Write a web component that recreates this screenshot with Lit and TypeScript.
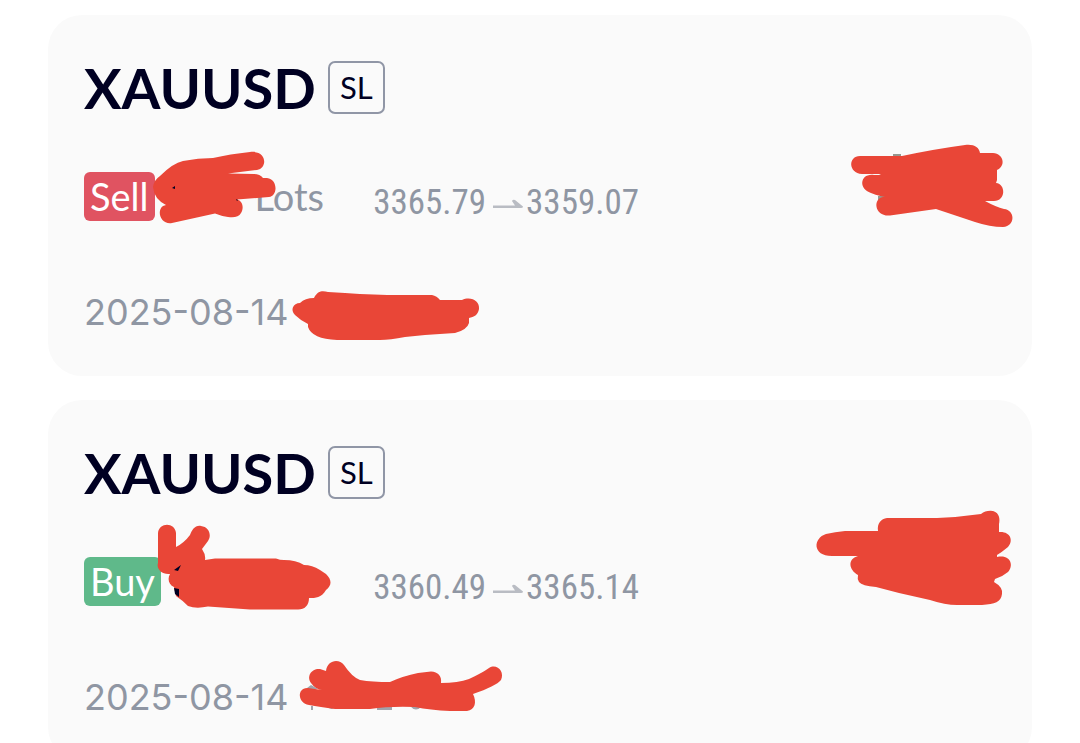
import { LitElement, html, css, svg } from "lit";
import { customElement, property } from "lit/decorators.js";

interface Trade {
  symbol: string;
  side: "Sell" | "Buy";
  open: string;
  close: string;
  date: string;
  top: number;
  left: unknown;
  right: unknown;
}

const trades: Trade[] = [
  {
    symbol: "XAUUSD",
    side: "Sell",
    open: "3365.79",
    close: "3359.07",
    date: "2025-08-14",
    top: 15,
    left: svg`
      <path d="M153 187Q154 180 160 176Q173 163 183 161Q198 158 213 158Q230 154 250 152C267 150 268 168 257 170L228 173.500L254 174Q260 174 263 178H267C278 179 278 196 269 197L237 199.500C243 201 244 208 241 213C239 217 234 218 228 217Q221 216 215 213.500L172 223C161 225 156 211 163 206L166 205Q154 199 153 187Z"/>
      <path class="ink" d="M172 188L175 186V189ZM236 199L238 200L237 201Z"/>
      <path d="M300 303Q305 298 314 298C318 290 323 291 328 292L345 293Q375 295 400 295H432Q437 296 440 300H462C471 296 480 301 479 309C478 315 474 317 469 318V323Q467 330 455 333Q440 334 425 335L405 337Q390 340 380 340H337Q312 339 308 327V324Q300 320 295 315C290 310 293 303 300 303Z"/>`,
    right: svg`
      <path class="trace" d="M893 154H901V159H893ZM878 196H888V200H878Z"/>
      <path d="M860 156H902Q935 149 965 145C974 144 979 147 980 153H993C1004 154 1006 166 997 170V180L996 183C1006 184 1006 201 994 201L985 201Q996 207 1004 209C1015 210 1016 226 1003 227Q990 227 975 222L936 209L890 215.500C875 217 872 199 883 197L894 197Q882 198 871 193C858 189 860 173 874 175H881L879 174H862C848 173 848 156 860 156Z"/>`,
  },
  {
    symbol: "XAUUSD",
    side: "Buy",
    open: "3360.49",
    close: "3365.14",
    date: "2025-08-14",
    top: 400,
    left: svg`
      <path d="M158 533C159 522 175 522 176 533V547Q184 543 190 535C192 530 195 525 201 526C209 527 212 535 208 541L202 549Q206 555 205 560L215 558.500H276Q280 560 284 560Q296 560 304 565Q312 565 320 570L326 574C332 580 332 585 326 590C321 598 316 598 309 598C309 606 304 610 297 609.500H250L208 606.500Q196 609 188 606Q182 600 176 596L174 587C169 585 167 579 170 574C162 575 156 569 158 563Z"/>
      <path class="ink" d="M174 570L181 565L178 571ZM174 588L179 589V597L175 594Z"/>
      <path class="time-trace" d="M307 688L311 685L318 689H307ZM311 706H313V710H311ZM326 706H337Q332 712 326 706ZM358 706H370Q364 712 358 706ZM377 706H392V710H377ZM410 706H422Q416 713 410 706Z"/>
      <path d="M311 683C306 676 312 668 320 669L326 671C327 660 339 658 344 665Q352 677 360 680Q372 682 390 682Q403 676 418 673L431 671.500C438 672 442 676 441 683Q458 683 469 679Q482 673 489 668C497 663 505 672 501 680Q496 686 473 694C477 702 475 710 467 711H450Q430 710 415 707Q390 706 370 709L335 709Q320 707 309 705C297 703 297 687 308 688L322 690Q315 689 311 683Z"/>`,
    right: svg`
      <path d="M826 534Q835 532 845 531H878C877 523 881 519 887 518H937Q960 517 981 514Q986 510 993 511C1000 513 1000 520 999 524V532C1010 531 1014 540 1008 547Q1002 552 997 555V557C1011 554 1014 566 1008 572Q1002 577 995 579L994 582Q1003 587 1002 594C1001 602 995 604 982 605H957Q945 605 930 600L899 593L876 587Q862 586 859 582Q857 579 858 575C849 570 847 559 858 556Q850 556 832 556C812 556 813 538 826 534Z"/>`,
  },
];

@customElement("trade-card")
export class TradeCard extends LitElement {
  @property({ attribute: false }) trade!: Trade;

  static styles = css`
    :host {
      display: block;
      position: relative;
      box-sizing: border-box;
      padding: 46px 36px 42px;
      border-radius: 34px;
      background: #fafafa;
      color: #8f96a3;
      font-family: Lato, "Noto Sans", sans-serif;
      font-size: 38px;
    }
    .head {
      display: flex;
      align-items: center;
      gap: 12px;
    }
    h2 {
      margin: 0;
      color: #000022;
      font-size: 56px;
      line-height: 53px;
      font-weight: 700;
    }
    .tag {
      box-sizing: border-box;
      height: 53px;
      padding: 0 10px;
      border: 2px solid #9096a6;
      border-radius: 7px;
      color: #000022;
      font-size: 31px;
      line-height: 49px;
    }
    .deal {
      display: grid;
      grid-template-columns: 240px 315px 1fr;
      align-items: center;
      margin-top: 58px;
      line-height: 49px;
    }
    .volume {
      display: flex;
      justify-content: space-between;
    }
    .side {
      padding: 0 6px;
      border-radius: 6px;
      color: #fff;
    }
    .sell {
      background: #e05361;
    }
    .buy {
      background: #5fb98a;
    }
    .prices {
      display: flex;
      justify-content: flex-end;
      align-items: center;
      gap: 2px;
      padding-top: 12px;
      font-family: "Roboto Condensed", "Liberation Sans Narrow", Roboto, sans-serif;
      font-size: 35px;
      line-height: 36px;
    }
    .arrow {
      width: 36px;
      height: 12px;
      padding-top: 4px;
      fill: #b9bcc3;
    }
    time {
      display: block;
      margin-top: 69px;
      font-family: Inter, sans-serif;
      font-size: 36px;
      line-height: 44px;
    }
    .mark {
      position: absolute;
      top: 0;
      width: 480px;
      height: 361px;
      fill: #e94637;
      pointer-events: none;
    }
    .start {
      left: 0;
    }
    .end {
      right: 0;
    }
    .ink {
      fill: #000022;
    }
    .trace {
      fill: #96978f;
    }
    .time-trace {
      fill: #a0a3ab;
    }
  `;

  render() {
    const t = this.trade;
    return html`
      <div class="head">
        <h2>${t.symbol}</h2>
        <span class="tag">SL</span>
      </div>
      <div class="deal">
        <div class="volume">
          <span class="side ${t.side.toLowerCase()}">${t.side}</span>
          ${t.side === "Sell" ? html`<span>Lots</span>` : null}
        </div>
        <div class="prices">
          <span>${t.open}</span>
          <svg class="arrow" viewBox="0 0 36 12" aria-hidden="true">
            <path d="M5 6.500H27L24 2Q25 0 27 1L35 7.500Q35 9 33 9H5Z" />
          </svg>
          <span>${t.close}</span>
        </div>
      </div>
      <time datetime=${t.date}>${t.date}</time>
      <svg class="mark start" viewBox="48 ${t.top} 480 361" aria-hidden="true">${t.left}</svg>
      <svg class="mark end" viewBox="552 ${t.top} 480 361" aria-hidden="true">${t.right}</svg>
    `;
  }
}

@customElement("app-root")
export class AppRoot extends LitElement {
  static styles = css`
    :host {
      display: block;
      box-sizing: border-box;
      height: 100vh;
      overflow: hidden;
      background: #fff;
    }
    main {
      display: grid;
      gap: 24px;
      padding: 15px 48px;
    }
  `;

  render() {
    return html`<main>
      ${trades.map((t) => html`<trade-card .trade=${t}></trade-card>`)}
    </main>`;
  }
}
